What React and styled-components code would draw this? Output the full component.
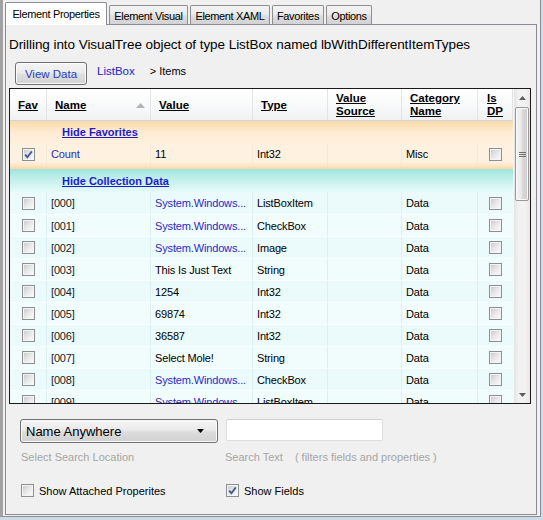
import React from 'react';
import styled, { createGlobalStyle } from 'styled-components';

const FONT = `"Liberation Sans", Arial, sans-serif`;
const COLS = '37px 104px 102px 75px 74px 76px 35px';

const GlobalStyle = createGlobalStyle`
  html, body { margin: 0; padding: 0; }
  body { background: #cadcea; font-family: ${FONT}; }
  * { box-sizing: border-box; }
`;

const Window = styled.div`
  width: 541px;
  height: 517px;
  background: #f0f0f0;
  border-left: 3px solid #a2a2a2;
  border-right: 1px solid #8d8d8d;
  border-bottom: 1px solid #8d8d8d;
  padding: 3px 3px 1px 2px;
  display: flex;
  flex-direction: column;
`;

const TabStrip = styled.div`
  display: flex;
  align-items: flex-end;
  gap: 2px;
  height: 22px;
  position: relative;
  z-index: 1;
  margin-bottom: -1px;
`;

const Tab = styled.div`
  width: ${p => p.$w}px;
  height: ${p => (p.$active ? 23 : 20)}px;
  border: 1px solid ${p => (p.$active ? '#898c95' : '#8e8f8f')};
  border-bottom: ${p => (p.$active ? 'none' : '1px solid #898c95')};
  border-radius: 2px 2px 0 0;
  background: ${p =>
    p.$active
      ? '#ffffff'
      : 'linear-gradient(#f3f3f3, #ececec 45%, #dedede 55%, #d2d2d2)'};
  font-size: 11px;
  letter-spacing: -0.35px;
  color: #000;
  display: flex;
  justify-content: center;
  padding-top: ${p => (p.$active ? 4 : 3)}px;
  line-height: 14px;
  white-space: nowrap;
`;

const Panel = styled.div`
  flex: 1;
  border: 1px solid #898c95;
  background: #f0f0f0;
  padding: 11px 4px 0 3px;
  display: flex;
  flex-direction: column;
`;

const Heading = styled.div`
  font-size: 13.5px;
  letter-spacing: -0.06px;
  line-height: 18px;
  color: #000;
  white-space: nowrap;
`;

const NavRow = styled.div`
  display: flex;
  align-items: center;
  margin-top: 8px;
  height: 23px;
  padding-left: 6px;
`;

const Button = styled.div`
  width: 72px;
  height: 23px;
  border: 1px solid #707070;
  border-radius: 3px;
  background: linear-gradient(#f4f4f4, #ececec 45%, #dedede 55%, #d3d3d3);
  box-shadow: inset 0 0 0 1px #fbfbfb;
  color: #2b3cc4;
  font-size: 11.5px;
  display: flex;
  align-items: center;
  justify-content: center;
  padding-top: 1px;
`;

const NavLink = styled.span`
  margin-left: 10px;
  font-size: 11.5px;
  color: #2323c8;
  position: relative;
  top: -3px;
`;

const Crumb = styled.span`
  margin-left: 15px;
  font-size: 11px;
  color: #000;
  position: relative;
  top: -3px;
`;

const GridFrame = styled.div`
  margin-top: 3px;
  height: 316px;
  width: 522px;
  border: 1px solid #1a1a1a;
  display: flex;
  overflow: hidden;
`;

const GridBody = styled.div`
  width: 503px;
  display: flex;
  flex-direction: column;
  overflow: hidden;
`;

const HeaderRow = styled.div`
  display: grid;
  grid-template-columns: ${COLS};
  height: 32px;
  flex: none;
  background: linear-gradient(#ffffff, #f8f9fa 55%, #f0f1f2);
  border-bottom: 1px solid #d5d5d5;
`;

const HeadCell = styled.div`
  display: flex;
  align-items: center;
  justify-content: ${p => (p.$center ? 'center' : 'space-between')};
  padding-left: ${p => (p.$center ? 0 : 8)}px;
  padding-top: 1px;
  border-right: 1px solid #e3e4e6;
  font-weight: bold;
  font-size: 11.5px;
  line-height: 13px;
  text-decoration: underline;
  color: #000;
`;

const SortArrow = styled.svg`
  margin-right: 5px;
  flex: none;
`;

const FavGroup = styled.div`
  flex: none;
  height: 48px;
  background: linear-gradient(#fdd9aa 0, #feeacf 10px, #fff1e0 24px, #fff1e0 41px, #fee4c2 45px, #fcd8a6 48px);
`;

const GroupHeader = styled.div`
  height: ${p => p.$h}px;
  flex: none;
  display: flex;
  align-items: center;
  padding-left: 52px;
  background: ${p => p.$bg || 'transparent'};
`;

const GroupLink = styled.span`
  font-weight: bold;
  font-size: 11px;
  color: #1c1ccc;
  text-decoration: underline;
`;

const Row = styled.div`
  display: grid;
  grid-template-columns: ${COLS};
  height: 22px;
  flex: none;
  background: ${p => p.$bg || 'transparent'};
  border-top: ${p => (p.$sep ? '1px solid #f9ffff' : 'none')};
`;

const Cell = styled.div`
  display: flex;
  align-items: center;
  justify-content: ${p => (p.$center ? 'center' : 'flex-start')};
  padding-left: ${p => (p.$center ? 0 : 4)}px;
  border-right: 1px solid ${p => p.$line || 'rgba(0,0,0,0.05)'};
  font-size: 11px;
  letter-spacing: -0.15px;
  color: ${p => p.$color || '#000'};
  white-space: nowrap;
  overflow: hidden;
`;

const ScrollBar = styled.div`
  width: 17px;
  flex: none;
  display: flex;
  flex-direction: column;
  background: linear-gradient(90deg, #e4e4e4, #f2f2f2 30%, #f2f2f2 70%, #e8e8e8);
  border-left: 1px solid #f6f6f6;
`;

const ScrollBtn = styled.div`
  height: 17px;
  flex: none;
  display: flex;
  align-items: center;
  justify-content: center;
`;

const Thumb = styled.div`
  margin: 1px 1px 0 1px;
  height: 94px;
  flex: none;
  border: 1px solid #979797;
  border-radius: 2px;
  background: linear-gradient(90deg, #f4f4f4, #e9e9e9 45%, #d9d9d9 55%, #cdcdcd);
  box-shadow: inset 0 0 0 1px #fafafa;
  display: flex;
  align-items: center;
  justify-content: center;
`;

const Spacer = styled.div`
  flex: 1;
`;

const BoxWrap = styled.span`
  position: relative;
  display: inline-block;
  width: 13px;
  height: 13px;
  flex: none;
  border: 1px solid #8e8f8f;
  background: #f4f4f4;
  &::before {
    content: '';
    position: absolute;
    left: 1px;
    top: 1px;
    right: 1px;
    bottom: 1px;
    background: linear-gradient(135deg, #cbcdd1, #e9eaeb 55%, #f8f8f8);
  }
`;

const CheckSvg = styled.svg`
  position: absolute;
  left: -1px;
  top: -1px;
`;

function CheckBox({ checked }) {
  return (
    <BoxWrap>
      {checked && (
        <CheckSvg width="13" height="13" viewBox="0 0 13 13">
          <path d="M3.2 6.6 L5.4 9.2 L9.8 3.4" fill="none" stroke="#4b5d8e" strokeWidth="1.9" />
        </CheckSvg>
      )}
    </BoxWrap>
  );
}

const BottomArea = styled.div`
  margin-top: 15px;
  margin-left: 11px;
  display: grid;
  grid-template-columns: 206px 1fr;
  grid-template-rows: 24px 28px 38px;
`;

const Select = styled.div`
  width: 198px;
  height: 24px;
  border: 1px solid #707070;
  border-radius: 3px;
  background: linear-gradient(#f5f5f5, #eaeaea 45%, #dcdcdc 55%, #d1d1d1);
  box-shadow: inset 0 0 0 1px #f9f9f9;
  display: flex;
  align-items: center;
  justify-content: space-between;
  padding: 0 13px 0 5px;
  font-size: 13px;
  color: #000;
`;

const TextBox = styled.div`
  width: 157px;
  height: 22px;
  background: #fff;
  border: 1px solid #dedede;
  border-top-color: #cfcfcf;
  border-radius: 2px;
`;

const Hint = styled.div`
  align-self: center;
  font-size: 11px;
  color: #a6a6a6;
  white-space: nowrap;
  margin-left: ${p => p.$ml || 0}px;
`;

const HintNote = styled.span`
  margin-left: 12px;
`;

const CheckRow = styled.div`
  align-self: center;
  display: flex;
  align-items: center;
  gap: 5px;
  font-size: 11px;
  color: #000;
  margin-left: ${p => p.$ml || 0}px;
  padding-top: 1px;
`;

const tabs = [
  { label: 'Element Properties', w: 102, active: true },
  { label: 'Element Visual', w: 79 },
  { label: 'Element XAML', w: 80 },
  { label: 'Favorites', w: 52 },
  { label: 'Options', w: 46 },
];

const rows = [
  ['[000]', 'System.Windows...', 'ListBoxItem', true],
  ['[001]', 'System.Windows...', 'CheckBox', true],
  ['[002]', 'System.Windows...', 'Image', true],
  ['[003]', 'This Is Just Text', 'String', false],
  ['[004]', '1254', 'Int32', false],
  ['[005]', '69874', 'Int32', false],
  ['[006]', '36587', 'Int32', false],
  ['[007]', 'Select Mole!', 'String', false],
  ['[008]', 'System.Windows...', 'CheckBox', true],
  ['[009]', 'System.Windows...', 'ListBoxItem', true],
];

const LINK = '#2a2ac6';

export default function App() {
  return (
    <>
      <GlobalStyle />
      <Window>
        <TabStrip>
          {tabs.map(t => (
            <Tab key={t.label} $w={t.w} $active={t.active}>
              {t.label}
            </Tab>
          ))}
        </TabStrip>
        <Panel>
          <Heading>Drilling into VisualTree object of type ListBox named lbWithDifferentItemTypes</Heading>
          <NavRow>
            <Button>View Data</Button>
            <NavLink>ListBox</NavLink>
            <Crumb>&gt; Items</Crumb>
          </NavRow>
          <GridFrame>
            <GridBody>
              <HeaderRow>
                <HeadCell $center>Fav</HeadCell>
                <HeadCell>
                  <span>Name</span>
                  <SortArrow width="9" height="5" viewBox="0 0 9 5">
                    <path d="M0 5 L4.5 0 L9 5 Z" fill="#b3b3b3" />
                  </SortArrow>
                </HeadCell>
                <HeadCell>Value</HeadCell>
                <HeadCell>Type</HeadCell>
                <HeadCell>Value<br />Source</HeadCell>
                <HeadCell>Category<br />Name</HeadCell>
                <HeadCell $center>Is<br />DP</HeadCell>
              </HeaderRow>
              <FavGroup>
                <GroupHeader $h={22}>
                  <GroupLink>Hide Favorites</GroupLink>
                </GroupHeader>
                <Row>
                  <Cell $center $line="rgba(0,0,0,0.03)"><CheckBox checked /></Cell>
                  <Cell $line="rgba(0,0,0,0.03)" $color={LINK}>Count</Cell>
                  <Cell $line="rgba(0,0,0,0.03)">11</Cell>
                  <Cell $line="rgba(0,0,0,0.03)">Int32</Cell>
                  <Cell $line="rgba(0,0,0,0.03)"></Cell>
                  <Cell $line="rgba(0,0,0,0.03)">Misc</Cell>
                  <Cell $center $line="transparent"><CheckBox /></Cell>
                </Row>
              </FavGroup>
              <GroupHeader $h={23} $bg="linear-gradient(#9fe4dc, #c3f0eb 45%, #e6fbf9)">
                <GroupLink>Hide Collection Data</GroupLink>
              </GroupHeader>
              {rows.map(([name, value, type, link], i) => (
                <Row key={name} $sep={i > 0} $bg={i % 2 ? '#f1fcfc' : '#ebfafa'}>
                  <Cell $center $line="#dcefef"><CheckBox /></Cell>
                  <Cell $line="#dcefef" $color="#222">{name}</Cell>
                  <Cell $line="#dcefef" $color={link ? LINK : '#000'}>{value}</Cell>
                  <Cell $line="#dcefef">{type}</Cell>
                  <Cell $line="#dcefef"></Cell>
                  <Cell $line="#dcefef">Data</Cell>
                  <Cell $center $line="transparent"><CheckBox /></Cell>
                </Row>
              ))}
            </GridBody>
            <ScrollBar>
              <ScrollBtn>
                <svg width="7" height="4" viewBox="0 0 7 4">
                  <path d="M0 4 L3.5 0 L7 4 Z" fill="#5e5e5e" />
                </svg>
              </ScrollBtn>
              <Thumb>
                <svg width="7" height="7" viewBox="0 0 7 7">
                  <path d="M0 1.5 H7 M0 3.5 H7 M0 5.5 H7" stroke="#6f6f6f" strokeWidth="1" />
                </svg>
              </Thumb>
              <Spacer />
              <ScrollBtn>
                <svg width="7" height="4" viewBox="0 0 7 4">
                  <path d="M0 0 L3.5 4 L7 0 Z" fill="#5e5e5e" />
                </svg>
              </ScrollBtn>
            </ScrollBar>
          </GridFrame>
          <BottomArea>
            <Select>
              <span>Name Anywhere</span>
              <svg width="7" height="4" viewBox="0 0 7 4">
                <path d="M0 0 L3.5 4 L7 0 Z" fill="#000" />
              </svg>
            </Select>
            <TextBox />
            <Hint $ml={1}>Select Search Location</Hint>
            <Hint $ml={-1}>
              Search Text<HintNote>( filters fields and properties )</HintNote>
            </Hint>
            <CheckRow $ml={1}>
              <CheckBox />
              <span>Show Attached Properites</span>
            </CheckRow>
            <CheckRow>
              <CheckBox checked />
              <span>Show Fields</span>
            </CheckRow>
          </BottomArea>
        </Panel>
      </Window>
    </>
  );
}
